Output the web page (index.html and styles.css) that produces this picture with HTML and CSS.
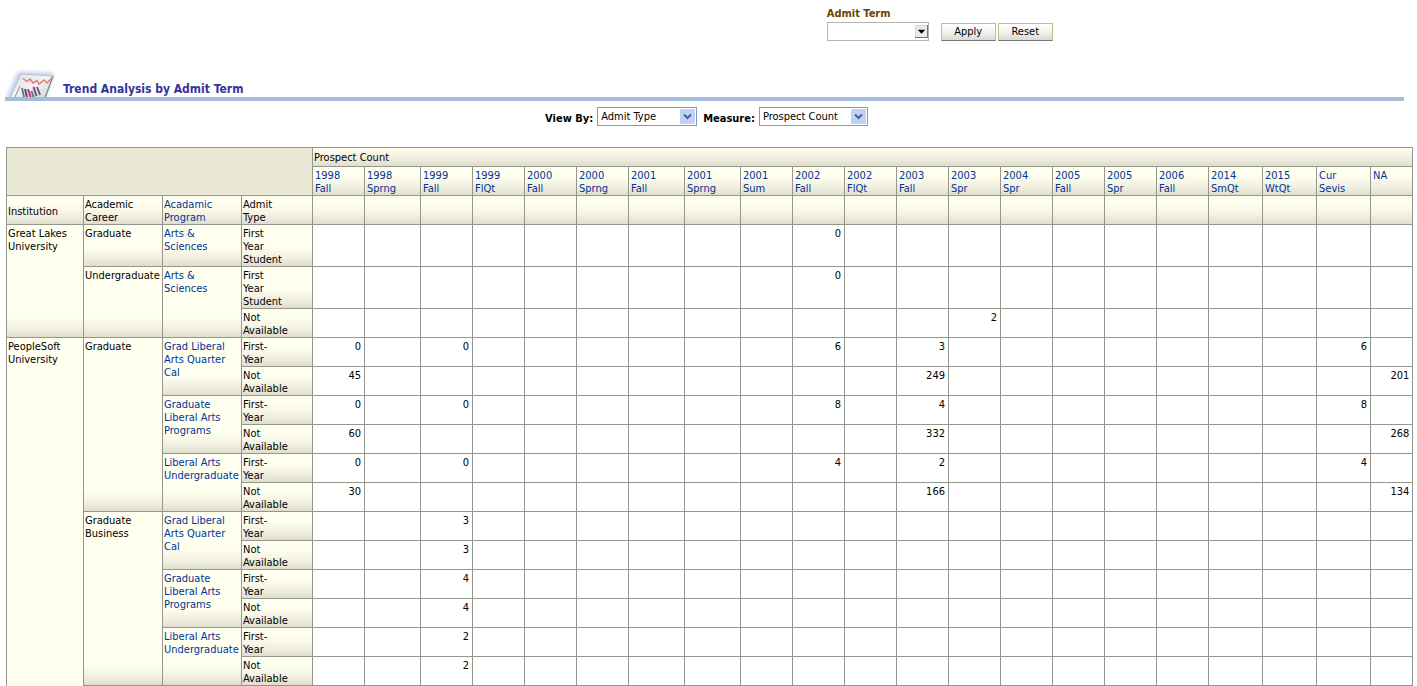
FILE: index.html
```html
<!DOCTYPE html>
<html lang="en">
<head>
<meta charset="utf-8">
<title>Trend Analysis by Admit Term</title>
<link rel="stylesheet" href="styles.css">
</head>
<body>
<form class="filter">
  <div class="filter-body">
    <label class="filter-label" for="term">Admit Term</label>
    <div class="filter-row">
      <span class="combo combo-term">
        <select id="term"><option></option></select>
        <svg class="term-arrow" viewBox="0 0 14 14" aria-hidden="true"><rect x=".5" y=".5" width="13" height="13" fill="#ecebe6" stroke="#d2d1cb"/><path d="M13.5 0v13.5H0" fill="none" stroke="#66665f"/><path d="M3 5h8L7 9.500z" fill="#000"/></svg>
      </span>
      <button class="btn" type="button">Apply</button>
      <button class="btn" type="reset">Reset</button>
    </div>
  </div>
</form>

<header class="title">
  <svg class="title-icon" viewBox="0 0 50 28" aria-hidden="true">
    <defs>
      <filter id="glow" x="-20%" y="-20%" width="140%" height="140%"><feGaussianBlur stdDeviation="2"/></filter>
      <linearGradient id="sheet" x1="0" y1="0" x2="1" y2="1"><stop offset="0" stop-color="#dfe1ea"/><stop offset=".5" stop-color="#f2f2f4"/><stop offset="1" stop-color="#d2d2d6"/></linearGradient>
    </defs>
    <path d="M13 3L49 4 40 30H1z" fill="#bccaf0" filter="url(#glow)"/>
    <path d="M16 5L48 7 40 29H5z" fill="url(#sheet)" stroke="#b9bac0" stroke-width=".8"/>
    <path d="M48 7L40 29" stroke="#85858c" stroke-width="1.200"/>
    <path d="M18 9.500L22 12.500 25 10 28 14 32 11.500 34 15 39 11 42 14 47 9" fill="none" stroke="#e57b6d" stroke-width="1.500"/>
    <path d="M15 17L10 28" fill="none" stroke="#8d8d98" stroke-width="1"/>
    <g fill="none" stroke-width="2"><path d="M17 19L19 28" stroke="#77778a"/><path d="M20 20L22 28" stroke="#55505f"/><path d="M23 20L25.500 28" stroke="#d02c86"/><path d="M26.500 22L28.500 28" stroke="#3d8a6b"/><path d="M28.500 18L31.500 27" stroke="#9a3690"/><path d="M32 18L35 26" stroke="#4b6a60"/></g>
  </svg>
  <h1>Trend Analysis by Admit Term</h1>
</header>

<form class="views">
  <label for="viewby">View By:</label>
  <span class="combo combo-type">
    <select id="viewby"><option>Admit Type</option></select>
    <svg class="arrow" viewBox="0 0 15 15" aria-hidden="true"><rect width="15" height="15" rx="1.500" fill="#bfd1fb"/><path d="M4 5.500l3.500 3.500L11 5.500" fill="none" stroke="#4d6185" stroke-width="2"/></svg>
  </span>
  <label for="measure">Measure:</label>
  <span class="combo combo-measure">
    <select id="measure"><option>Prospect Count</option></select>
    <svg class="arrow" viewBox="0 0 15 15" aria-hidden="true"><rect width="15" height="15" rx="1.500" fill="#bfd1fb"/><path d="M4 5.500l3.500 3.500L11 5.500" fill="none" stroke="#4d6185" stroke-width="2"/></svg>
  </span>
</form>

<table class="pivot">
  <colgroup>
    <col class="w77"><col class="w79" span="2"><col class="w71">
    <col class="w52"><col class="w56"><col class="w52" span="4"><col class="w56" span="2">
    <col class="w52" span="9"><col class="w54" span="3"><col class="w42">
  </colgroup>
  <thead>
    <tr class="measure-row"><td class="corner" colspan="4" rowspan="2"></td><th colspan="21">Prospect Count</th></tr>
    <tr class="terms">
      <th><a href="#">1998<br>Fall</a></th><th><a href="#">1998<br>Sprng</a></th><th><a href="#">1999<br>Fall</a></th><th><a href="#">1999<br>FlQt</a></th>
      <th><a href="#">2000<br>Fall</a></th><th><a href="#">2000<br>Sprng</a></th><th><a href="#">2001<br>Fall</a></th><th><a href="#">2001<br>Sprng</a></th><th><a href="#">2001<br>Sum</a></th>
      <th><a href="#">2002<br>Fall</a></th><th><a href="#">2002<br>FlQt</a></th><th><a href="#">2003<br>Fall</a></th><th><a href="#">2003<br>Spr</a></th><th><a href="#">2004<br>Spr</a></th>
      <th><a href="#">2005<br>Fall</a></th><th><a href="#">2005<br>Spr</a></th><th><a href="#">2006<br>Fall</a></th><th><a href="#">2014<br>SmQt</a></th><th><a href="#">2015<br>WtQt</a></th><th><a href="#">Cur<br>Sevis</a></th><th><a href="#">NA</a></th>
    </tr>
    <tr class="fields">
      <th class="middle">Institution</th><th>Academic Career</th><th><a href="#">Acadamic Program</a></th><th>Admit<br>Type</th>
      <th></th><th></th><th></th><th></th><th></th><th></th><th></th><th></th><th></th><th></th><th></th><th></th><th></th><th></th><th></th><th></th><th></th><th></th><th></th><th></th><th></th>
    </tr>
  </thead>
  <tbody>
    <tr>
      <th rowspan="3">Great Lakes University</th><th>Graduate</th><th><a href="#">Arts &amp;<br>Sciences</a></th><th>First<br>Year<br>Student</th>
      <td></td><td></td><td></td><td></td><td></td><td></td><td></td><td></td><td></td><td>0</td><td></td><td></td><td></td><td></td><td></td><td></td><td></td><td></td><td></td><td></td><td></td>
    </tr>
    <tr>
      <th rowspan="2">Undergraduate</th><th rowspan="2"><a href="#">Arts &amp;<br>Sciences</a></th><th>First<br>Year<br>Student</th>
      <td></td><td></td><td></td><td></td><td></td><td></td><td></td><td></td><td></td><td>0</td><td></td><td></td><td></td><td></td><td></td><td></td><td></td><td></td><td></td><td></td><td></td>
    </tr>
    <tr>
      <th>Not<br>Available</th>
      <td></td><td></td><td></td><td></td><td></td><td></td><td></td><td></td><td></td><td></td><td></td><td></td><td>2</td><td></td><td></td><td></td><td></td><td></td><td></td><td></td><td></td>
    </tr>
    <tr>
      <th class="open" rowspan="12">PeopleSoft University</th><th rowspan="6">Graduate</th><th rowspan="2"><a href="#">Grad Liberal Arts Quarter Cal</a></th><th>First-<br>Year</th>
      <td>0</td><td></td><td>0</td><td></td><td></td><td></td><td></td><td></td><td></td><td>6</td><td></td><td>3</td><td></td><td></td><td></td><td></td><td></td><td></td><td></td><td>6</td><td></td>
    </tr>
    <tr>
      <th>Not<br>Available</th>
      <td>45</td><td></td><td></td><td></td><td></td><td></td><td></td><td></td><td></td><td></td><td></td><td>249</td><td></td><td></td><td></td><td></td><td></td><td></td><td></td><td></td><td>201</td>
    </tr>
    <tr>
      <th rowspan="2"><a href="#">Graduate<br>Liberal Arts Programs</a></th><th>First-<br>Year</th>
      <td>0</td><td></td><td>0</td><td></td><td></td><td></td><td></td><td></td><td></td><td>8</td><td></td><td>4</td><td></td><td></td><td></td><td></td><td></td><td></td><td></td><td>8</td><td></td>
    </tr>
    <tr>
      <th>Not<br>Available</th>
      <td>60</td><td></td><td></td><td></td><td></td><td></td><td></td><td></td><td></td><td></td><td></td><td>332</td><td></td><td></td><td></td><td></td><td></td><td></td><td></td><td></td><td>268</td>
    </tr>
    <tr>
      <th rowspan="2"><a href="#">Liberal Arts Undergraduate</a></th><th>First-<br>Year</th>
      <td>0</td><td></td><td>0</td><td></td><td></td><td></td><td></td><td></td><td></td><td>4</td><td></td><td>2</td><td></td><td></td><td></td><td></td><td></td><td></td><td></td><td>4</td><td></td>
    </tr>
    <tr>
      <th>Not<br>Available</th>
      <td>30</td><td></td><td></td><td></td><td></td><td></td><td></td><td></td><td></td><td></td><td></td><td>166</td><td></td><td></td><td></td><td></td><td></td><td></td><td></td><td></td><td>134</td>
    </tr>
    <tr>
      <th rowspan="6">Graduate Business</th><th rowspan="2"><a href="#">Grad Liberal Arts Quarter Cal</a></th><th>First-<br>Year</th>
      <td></td><td></td><td>3</td><td></td><td></td><td></td><td></td><td></td><td></td><td></td><td></td><td></td><td></td><td></td><td></td><td></td><td></td><td></td><td></td><td></td><td></td>
    </tr>
    <tr>
      <th>Not<br>Available</th>
      <td></td><td></td><td>3</td><td></td><td></td><td></td><td></td><td></td><td></td><td></td><td></td><td></td><td></td><td></td><td></td><td></td><td></td><td></td><td></td><td></td><td></td>
    </tr>
    <tr>
      <th rowspan="2"><a href="#">Graduate<br>Liberal Arts Programs</a></th><th>First-<br>Year</th>
      <td></td><td></td><td>4</td><td></td><td></td><td></td><td></td><td></td><td></td><td></td><td></td><td></td><td></td><td></td><td></td><td></td><td></td><td></td><td></td><td></td><td></td>
    </tr>
    <tr>
      <th>Not<br>Available</th>
      <td></td><td></td><td>4</td><td></td><td></td><td></td><td></td><td></td><td></td><td></td><td></td><td></td><td></td><td></td><td></td><td></td><td></td><td></td><td></td><td></td><td></td>
    </tr>
    <tr>
      <th rowspan="2"><a href="#">Liberal Arts Undergraduate</a></th><th>First-<br>Year</th>
      <td></td><td></td><td>2</td><td></td><td></td><td></td><td></td><td></td><td></td><td></td><td></td><td></td><td></td><td></td><td></td><td></td><td></td><td></td><td></td><td></td><td></td>
    </tr>
    <tr>
      <th>Not<br>Available</th>
      <td></td><td></td><td>2</td><td></td><td></td><td></td><td></td><td></td><td></td><td></td><td></td><td></td><td></td><td></td><td></td><td></td><td></td><td></td><td></td><td></td><td></td>
    </tr>
  </tbody>
</table>
</body>
</html>
```

FILE: styles.css
```css
* { box-sizing: border-box; }

body {
  margin: 0;
  padding: 6px 4px 0 6px;
  background: #fff;
  color: #000;
  font: 11px/13px "DejaVu Sans Condensed", Tahoma, "DejaVu Sans", sans-serif;
}

a { color: #039; text-decoration: none; }

/* prompt */
.filter { display: grid; grid-template-columns: 7fr 5fr; }
.filter-body { grid-column: 2; }
.filter-label { display: block; color: #6b4400; font-weight: bold; line-height: 15px; }
.filter-row { display: flex; align-items: center; gap: 2px; height: 21px; }
.combo { position: relative; display: block; }
.combo select {
  display: block;
  width: 100%;
  height: 19px;
  margin: 0;
  padding: 0 18px 0 3px;
  appearance: none;
  border: 1px solid #7f9db9;
  border-radius: 0;
  background: #fff;
  color: #000;
  font: inherit;
}
.combo-term { width: 102px; margin-right: 10px; }
.combo-term select { border-color: #b5b5b0; }
.term-arrow { position: absolute; top: 3px; right: 1px; width: 13px; height: 13px; pointer-events: none; }
.arrow { position: absolute; top: 2px; right: 2px; width: 15px; height: 15px; pointer-events: none; }
.btn {
  width: 55px;
  height: 18px;
  padding: 0;
  border: 1px solid #bdbe8c;
  border-bottom-color: #777;
  background: linear-gradient(#fff, #f2f2ef 50%, #d9d9d4);
  color: #000;
  font: inherit;
}

/* title */
.title {
  display: flex;
  align-items: flex-end;
  gap: 8px;
  margin: 27px 9px 0 -1px;
  border-bottom: 4px solid #a3bcd9;
}
.title-icon { display: block; width: 50px; height: 28px; }
.title h1 { margin: 0; color: #339; font-size: 12px; line-height: 15px; }

/* view selectors */
.views { display: flex; justify-content: center; align-items: center; gap: 4px; margin: 6px 6px 21px 0; }
.views label { padding-top: 3px; font-weight: bold; }
.combo-type { width: 100px; margin-right: 2px; }
.combo-measure { width: 109px; }

/* pivot table */
.pivot { width: 100%; table-layout: fixed; border-collapse: collapse; }
.w42 { width: 42px; }
.w52 { width: 52px; }
.w54 { width: 54px; }
.w56 { width: 56px; }
.w71 { width: 71px; }
.w77 { width: 77px; }
.w79 { width: 79px; }
.pivot th, .pivot td { padding: 2px 1px 0; border: 1px solid #95968c; vertical-align: top; }
.pivot th {
  background: #ffffef linear-gradient(to top, #dfddcd, #f1efe0 8px, #ffffef 20px) no-repeat;
  font-weight: normal;
  text-align: left;
}
.pivot td { padding-right: 3px; text-align: right; }
.pivot .corner { background: #e9e8d5; }
.pivot .measure-row th { padding: 3px 1px 2px; }
.pivot .terms th { padding-left: 2px; }
.pivot .middle { vertical-align: middle; }
.pivot .open { border-bottom: none; background: #ffffef; }
```
